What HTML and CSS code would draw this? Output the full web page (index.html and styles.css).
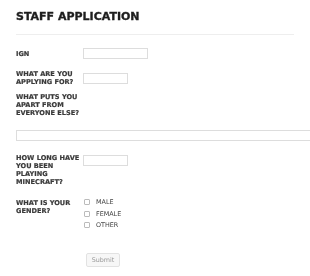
FILE: index.html
```html
<!DOCTYPE html>
<html lang="en">
<head>
    <meta charset="UTF-8">
    <title>Staff Application</title>
    <link rel="stylesheet" href="styles.css">
</head>
<body>
    <div class="container">
        <h2>STAFF APPLICATION</h2>
        <form id="staffForm">
            <div class="row row-ign">
                <label class="label" for="ign">IGN</label>
                <input type="text" id="ign" name="ign" class="field field-wide">
            </div>

            <div class="row row-role">
                <label class="label" for="role">What are you applying for?</label>
                <input type="text" id="role" name="role" class="field">
            </div>

            <div class="row row-apart">
                <label class="label" for="apart">What puts you apart from everyone else?</label>
            </div>
            <textarea id="apart" name="apart" class="area"></textarea>

            <div class="row row-time">
                <label class="label" for="time">How long have you been playing Minecraft?</label>
                <input type="text" id="time" name="time" class="field">
            </div>

            <div class="row row-gender">
                <div class="label">What is your gender?</div>
                <div class="options">
                    <label class="option"><input type="checkbox" name="gender" value="Male"> Male</label>
                    <label class="option"><input type="checkbox" name="gender" value="Female"> Female</label>
                    <label class="option"><input type="checkbox" name="gender" value="Other"> Other</label>
                </div>
            </div>

            <button type="submit" class="submit-btn">Submit</button>
        </form>
    </div>
</body>
</html>
```

FILE: styles.css
```css
* {
    margin: 0;
    padding: 0;
    box-sizing: border-box;
    font-family: "DejaVu Sans", Verdana, sans-serif;
}

body {
    background: #fff;
    padding: 10px 0 0 16px;
    overflow: hidden;
}

.container {
    width: 278px;
}

h2 {
    font-size: 11px;
    line-height: 14px;
    font-weight: bold;
    color: #1e1e1e;
    -webkit-text-stroke: 0.35px #1e1e1e;
    padding-bottom: 10px;
    border-bottom: 1px solid #eee;
    margin-bottom: 13px;
}

.row {
    display: flex;
    align-items: flex-start;
}

.label {
    width: 67px;
    flex-shrink: 0;
    font-size: 6.6px;
    line-height: 8px;
    font-weight: bold;
    color: #3a3a3a;
    -webkit-text-stroke: 0.2px #3a3a3a;
    text-transform: uppercase;
}

.field {
    width: 45px;
    height: 11px;
    border: 1px solid #ddd;
    background: #fff;
    outline: none;
}

.field-wide {
    width: 65px;
}

.row-ign .label {
    padding-top: 1.5px;
}

.row-role {
    margin-top: 11px;
}

.row-role .field {
    margin-top: 3px;
}

.row-apart {
    margin-top: 7px;
}

.area {
    display: block;
    width: 300px;
    height: 11px;
    margin-top: 13px;
    border: 1px solid #ddd;
    resize: none;
    outline: none;
}

.row-time {
    margin-top: 13px;
}

.row-time .field {
    margin-top: 1px;
}

.row-gender {
    margin-top: 13px;
}

.options {
    display: flex;
    flex-direction: column;
    gap: 4.5px;
    margin-top: -0.5px;
    padding-left: 1px;
}

.option {
    display: flex;
    align-items: center;
    height: 7px;
    font-size: 6.4px;
    color: #444;
    text-transform: uppercase;
}

.option input {
    appearance: none;
    width: 6px;
    height: 6px;
    border: 1px solid #bbb;
    border-radius: 1px;
    margin-right: 6px;
    background: #fff;
}

.submit-btn {
    display: block;
    margin: 24px 0 0 70px;
    width: 34px;
    height: 14px;
    font-size: 6.4px;
    color: #999;
    background: #f7f7f7;
    border: 1px solid #e2e2e2;
    border-radius: 2px;
    cursor: pointer;
}
```
